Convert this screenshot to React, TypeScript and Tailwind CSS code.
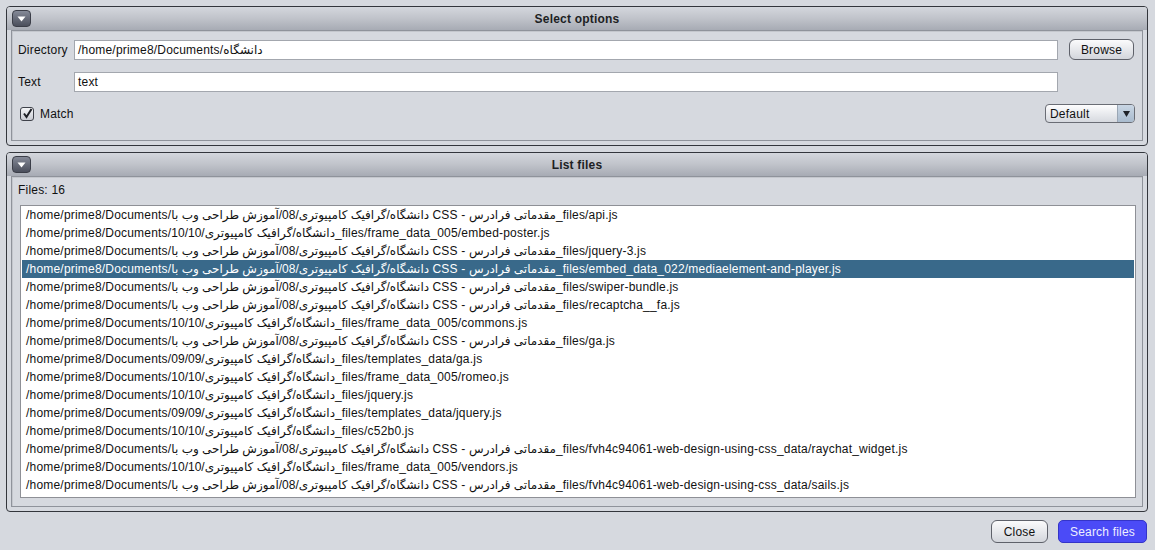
import React from "react";

const A = "/home/prime8/Documents/دانشگاه/گرافیک کامپیوتری/08/آموزش طراحی وب با CSS - مقدماتی فرادرس_files/";
const B = "/home/prime8/Documents/دانشگاه/گرافیک کامپیوتری/10/10_files/";
const C = "/home/prime8/Documents/دانشگاه/گرافیک کامپیوتری/09/09_files/";

const rows = [
  A + "api.js",
  B + "frame_data_005/embed-poster.js",
  A + "jquery-3.js",
  A + "embed_data_022/mediaelement-and-player.js",
  A + "swiper-bundle.js",
  A + "recaptcha__fa.js",
  B + "frame_data_005/commons.js",
  A + "ga.js",
  C + "templates_data/ga.js",
  B + "frame_data_005/romeo.js",
  B + "jquery.js",
  C + "templates_data/jquery.js",
  B + "c52b0.js",
  A + "fvh4c94061-web-design-using-css_data/raychat_widget.js",
  B + "frame_data_005/vendors.js",
  A + "fvh4c94061-web-design-using-css_data/sails.js",
];

const FA = /([\u0600-\u06FF\u200C]+(?: [\u0600-\u06FF\u200C]+)*)/;

function Mixed({ text }: { text: string }) {
  const parts = text.split(FA);
  return (
    <>
      {parts.map((p, i) =>
        i % 2 === 1 ? (
          <span key={i} className="tracking-normal">
            {p}
          </span>
        ) : (
          <React.Fragment key={i}>{p}</React.Fragment>
        )
      )}
    </>
  );
}

function TitleBar({ title }: { title: string }) {
  return (
    <div className="relative h-[23px] flex items-center justify-center bg-gradient-to-b from-[#d4d7dd] via-[#c0c3ca] to-[#a7abb4] rounded-t-[3px]">
      <div className="absolute left-[5px] top-[3px] w-[19px] h-[17px] rounded-[4px] border border-[#3b3e48] bg-gradient-to-b from-[#858a98] to-[#4b4f5c] flex items-center justify-center">
        <svg width="9" height="6" viewBox="0 0 9 6">
          <polygon points="0.5,0.5 8.5,0.5 4.5,5.5" fill="#ffffff" />
        </svg>
      </div>
      <span className="text-[12px] font-bold text-[#1d1f24] tracking-[0.2px]">{title}</span>
    </div>
  );
}

const font = { fontFamily: '"Liberation Sans", "DejaVu Sans", sans-serif' };

export default function App() {
  return (
    <div
      className="w-[1155px] h-[550px] bg-[#d6d9df] pt-[6px] pl-[6px] pr-[7px] flex flex-col text-[12px] tracking-[0.2px] text-[#111]"
      style={font}
    >
      {/* Panel 1 */}
      <div className="h-[140px] border border-[#33363c] rounded-[4px] flex flex-col shrink-0">
        <TitleBar title="Select options" />
        <div className="flex-1 mx-[4px] mb-[4px] border border-[#8f939b] shadow-[inset_1px_1px_0_#c4c7cd] pl-[6px] pr-[8px] pt-[8px] flex flex-col">
          <div className="h-[21px] flex items-center">
            <div className="w-[56px]">Directory</div>
            <div
              dir="ltr"
              className="flex-1 h-[20px] leading-[18px] bg-white border border-[#a3a7ae] pl-[3px] whitespace-nowrap overflow-hidden"
            >
              <Mixed text="/home/prime8/Documents/دانشگاه" />
            </div>
            <div className="ml-[11px] w-[65px] h-[21px] rounded-[6px] border border-[#5e616a] bg-gradient-to-b from-[#fbfbfc] to-[#d3d6dc] flex items-center justify-center">
              Browse
            </div>
          </div>
          <div className="h-[21px] flex items-center mt-[11px]">
            <div className="w-[56px]">Text</div>
            <div className="flex-1 h-[20px] leading-[18px] bg-white border border-[#a3a7ae] pl-[3px]">text</div>
            <div className="ml-[11px] w-[65px]" />
          </div>
          <div className="h-[19px] flex items-center mt-[12px]">
            <div className="ml-[2px] w-[14px] h-[14px] rounded-[3px] border border-[#3f424a] bg-gradient-to-b from-[#f4f5f7] to-[#c9ccd3] flex items-center justify-center">
              <svg width="11" height="11" viewBox="0 0 11 11">
                <path d="M2 5.5 L4.5 9 L9.5 1" stroke="#1e2026" strokeWidth="2" fill="none" />
              </svg>
            </div>
            <span className="ml-[6px]">Match</span>
            <div className="flex-1" />
            <div className="w-[90px] h-[19px] rounded-[4px] border border-[#6a6d75] bg-gradient-to-b from-[#fdfdfe] to-[#d6d9df] flex overflow-hidden mr-[-1px]">
              <div className="flex-1 flex items-center pl-[4px]">Default</div>
              <div className="w-[17px] border-l border-[#9aa6b4] bg-gradient-to-b from-[#c9d6e4] to-[#a9bbce] flex items-center justify-center">
                <svg width="7" height="7" viewBox="0 0 7 7">
                  <polygon points="0,1 7,1 3.5,7" fill="#1f2228" />
                </svg>
              </div>
            </div>
          </div>
        </div>
      </div>

      {/* Panel 2 */}
      <div className="mt-[6px] h-[360px] border border-[#33363c] rounded-[4px] flex flex-col shrink-0">
        <TitleBar title="List files" />
        <div className="flex-1 mx-[4px] mb-[4px] border border-[#8f939b] shadow-[inset_1px_1px_0_#c4c7cd] pt-[5px] flex flex-col">
          <div className="h-[16px] leading-[16px] pl-[6px]">Files: 16</div>
          <div className="mt-[7px] ml-[8px] mr-[6px] mb-[8px] flex-1 bg-white border border-[#8e9096] px-[1px] overflow-hidden">
            {rows.map((r, i) => (
              <div
                key={i}
                dir="ltr"
                className={
                  "h-[18px] leading-[18px] pl-[4px] whitespace-nowrap " +
                  (i === 3 ? "bg-[#39698a] text-white" : "text-[#111]")
                }
              >
                <Mixed text={r} />
              </div>
            ))}
          </div>
        </div>
      </div>

      {/* Bottom buttons */}
      <div className="mt-[8px] flex justify-end pr-[1px] gap-[10px]">
        <div className="w-[57px] h-[23px] rounded-[6px] border border-[#5e616a] bg-gradient-to-b from-[#fbfbfc] to-[#d3d6dc] flex items-center justify-center">
          Close
        </div>
        <div className="w-[89px] h-[23px] rounded-[5px] border border-[#3434c8] bg-[#4b4bf7] text-[#eef0ff] flex items-center justify-center">
          Search files
        </div>
      </div>
    </div>
  );
}
